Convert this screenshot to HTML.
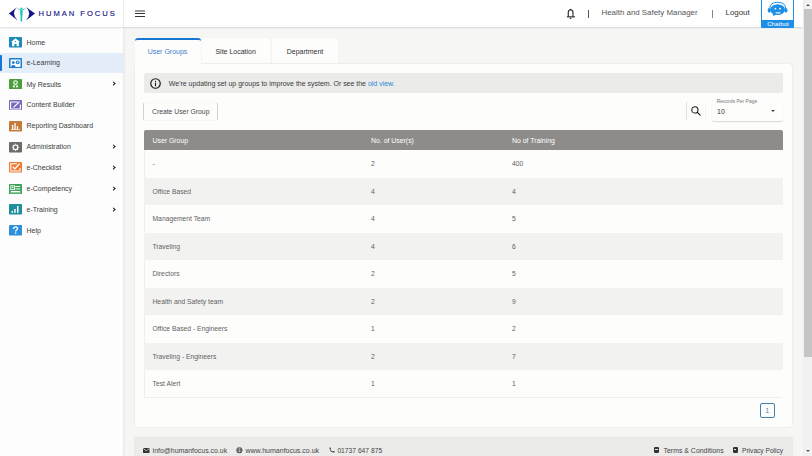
<!DOCTYPE html>
<html><head><meta charset="utf-8">
<style>
*{margin:0;padding:0;box-sizing:border-box}
html,body{width:812px;height:456px;overflow:hidden}
body{font-family:"Liberation Sans",sans-serif;background:#f6f6f5;position:relative;color:#333}
.abs{position:absolute}
.t{position:absolute;white-space:nowrap;line-height:10px;height:10px}
#header{left:0;top:0;width:803px;height:27px;background:#fff;box-shadow:0 1px 1.5px rgba(0,0,0,.13);z-index:5}
#sidebar{left:0;top:27px;width:124px;height:429px;background:#fdfdfd;border-right:1px solid #ebebeb;box-shadow:1px 0 2px rgba(0,0,0,.04)}
.ico{position:absolute;left:9px;width:13px;height:10.5px;border-radius:1px}
.st{position:absolute;left:26.5px;font-size:7px;color:#3c3c3c;line-height:10px;white-space:nowrap}
.chev{position:absolute;left:111.6px;width:2.9px;height:2.9px;border-right:1.1px solid #111;border-top:1.1px solid #111;transform:rotate(45deg);margin-top:-0.3px}
#scroll{left:803px;top:0;width:9px;height:456px;background:#f1f1f1}
#thumb{left:804px;top:9px;width:8px;height:348px;background:#c5c5c5}
.card{left:134.5px;top:63.5px;width:657.5px;height:363.5px;background:#fdfdfc;border-radius:3px;box-shadow:0 0 2.5px rgba(0,0,0,.1)}
.tab{position:absolute;top:38px;height:25px;background:#fdfdfc;border-radius:3px 3px 0 0;font-size:7px;text-align:center;line-height:25px;color:#333}
.row{position:absolute;left:144px;width:639px;height:27.5px}
.row.g{background:#f2f2f1}
.cell{position:absolute;font-size:6.75px;color:#626262;line-height:27.5px;white-space:nowrap}
</style></head><body>

<div id="header" class="abs">
  <!-- logo -->
  <svg class="abs" style="left:6px;top:3px" width="32" height="22" viewBox="0 0 32 22">
    <path d="M2.9 10.4 L12 3.4 Q8.2 6.5 8 10.4 Q8.2 14.3 11.6 17.4 Z" fill="#14178a"/>
    <path d="M29 10.4 L20 4.1 Q23 7 23.2 10.4 Q23 14.2 20 17.6 Z" fill="#14178a"/>
    <path d="M11.1 5.6 L14.4 7.6 L14.6 18.6 L16.2 18.6 L16.4 7.6 L19.8 5.6 L19.5 5.2 L16 6.6 L14.8 6.6 L11.4 5.2 Z" fill="#25c0c4"/>
    <circle cx="15.4" cy="5.6" r="1.1" fill="#25c0c4"/>
    <path d="M14.3 8 L16.5 8 L16.3 12 L14.5 12Z" fill="#25c0c4"/>
  </svg>
  <div class="t" style="left:38.6px;top:8.8px;font-size:7.6px;letter-spacing:1.97px;color:#14178a;-webkit-text-stroke:0.15px #14178a">HUMAN FOCUS</div>
  <div class="abs" style="left:123px;top:0;width:1px;height:27px;background:#ececec"></div>
  <!-- hamburger -->
  <div class="abs" style="left:135px;top:10.1px;width:10px;height:1.6px;background:#9c9c9c"></div>
  <div class="abs" style="left:135px;top:13px;width:10px;height:1.3px;background:#333"></div>
  <div class="abs" style="left:135px;top:16px;width:10px;height:1.3px;background:#333"></div>
  <!-- bell -->
  <svg class="abs" style="left:566px;top:8px" width="10" height="12" viewBox="0 0 10 12">
    <path d="M2.25 8.6 L2.25 4.2 Q2.25 1.9 4.6 1.7 Q6.95 1.9 6.95 4.2 L6.95 8.6" fill="none" stroke="#1a1a1a" stroke-width="1.05"/>
    <path d="M0.9 8.85 L8.9 8.85" stroke="#1a1a1a" stroke-width="1.1"/>
    <path d="M3.9 1.8 L4.6 0.6 L5.3 1.8Z" fill="#1a1a1a"/>
    <ellipse cx="4.6" cy="10.3" rx="0.9" ry="0.65" fill="#1a1a1a"/>
  </svg>
  <div class="abs" style="left:588px;top:10px;width:1px;height:7.7px;background:#555"></div>
  <div class="t" style="left:601.5px;top:8px;font-size:7.9px;color:#555">Health and Safety Manager</div>
  <div class="abs" style="left:712.2px;top:10px;width:1px;height:7.7px;background:#888"></div>
  <div class="t" style="left:725.5px;top:8px;font-size:7.9px;color:#333">Logout</div>
  <!-- chatbot -->
  <div class="abs" style="left:761px;top:0;width:33px;height:27.6px;border:1.1px solid #1e8fe6;border-top:none;background:#fff;border-radius:0 0 1.5px 1.5px"></div>
  <div class="abs" style="left:761px;top:19.8px;width:33px;height:7.8px;background:#1e8fe6;border-radius:0 0 1.5px 1.5px"></div>
  <div class="t" style="left:761.5px;top:19px;width:33px;text-align:center;font-size:6.2px;color:#fff">Chatbot</div>
  <svg class="abs" style="left:766px;top:1px" width="22" height="16" viewBox="0 0 22 16">
    <path d="M3.8 7.5 Q3.8 1.3 11.7 1.3 Q19.6 1.3 19.6 7.5" fill="none" stroke="#1e8fe6" stroke-width="1"/>
    <ellipse cx="11.6" cy="8.6" rx="7.3" ry="5.4" fill="#1e8fe6"/>
    <path d="M6.5 12 L7.4 15 L10.5 13.4Z" fill="#1e8fe6"/>
    <ellipse cx="3.3" cy="9.3" rx="1.6" ry="2.4" fill="#1e8fe6"/>
    <ellipse cx="19.9" cy="9.3" rx="1.6" ry="2.4" fill="#1e8fe6"/>
    <circle cx="9.4" cy="7.6" r="0.9" fill="#fff"/>
    <circle cx="14" cy="7.6" r="0.9" fill="#fff"/>
    <path d="M9.6 11.9 L14.6 11.9" stroke="#fff" stroke-width="1.1"/>
  </svg>
</div>

<div id="sidebar" class="abs">
</div>
<!-- sidebar items (absolute to body) -->
<div class="abs" style="left:0;top:53px;width:123px;height:20px;background:#e3eefa"></div>
<div class="abs" style="left:0;top:55px;width:2px;height:16px;background:#1976d2;border-radius:0 1px 1px 0"></div>

<svg class="abs" style="left:9px;top:37.1px" width="13" height="10.6" viewBox="0 0 13 10.6"><rect width="13" height="10.6" rx="0.8" fill="#1b8ab6"/><path d="M6.5 1.2 L11 5 L9.9 5 L9.9 9.2 L7.6 9.2 L7.6 7 L5.4 7 L5.4 9.2 L3.1 9.2 L3.1 5 L2 5 Z" fill="#fff"/><circle cx="6.5" cy="4.6" r="0.7" fill="#1b8ab6"/></svg>
<div class="st" style="top:37.9px">Home</div>
<svg class="abs" style="left:9px;top:57.8px" width="13" height="10.6" viewBox="0 0 13 10.6"><rect width="13" height="10.6" rx="0.8" fill="#1a7fd0"/><rect x="1.5" y="1.5" width="10" height="7.4" fill="#fff"/><circle cx="4.3" cy="4.6" r="1.45" fill="#1a7fd0"/><path d="M2.4 8.9 L2.4 7.6 Q4.3 6.2 6.2 7.6 L6.2 8.9Z" fill="#1a7fd0"/><circle cx="8.7" cy="4.3" r="1.9" fill="#1a7fd0"/><path d="M8.1 3.3 L9.8 4.3 L8.1 5.3Z" fill="#fff"/></svg>
<div class="st" style="top:58.1px">e-Learning</div>
<svg class="abs" style="left:9px;top:78.8px" width="13" height="10.6" viewBox="0 0 13 10.6"><rect width="13" height="10.6" rx="0.8" fill="#4a9f3c"/><circle cx="6.5" cy="3.6" r="1.8" fill="none" stroke="#fff" stroke-width="1.1"/><circle cx="4.9" cy="7.4" r="1.05" fill="#fff"/><circle cx="8.1" cy="7.4" r="1.05" fill="#fff"/></svg>
<div class="st" style="top:79.5px">My Results</div>
<div class="chev" style="top:82.5px"></div>
<svg class="abs" style="left:9px;top:99.6px" width="13" height="10.6" viewBox="0 0 13 10.6"><rect width="13" height="10.6" rx="0.8" fill="#7a66ba"/><path d="M1.6 2 L9 2 M1.6 1.5 L1.6 9 L11.4 9 L11.4 4.5" fill="none" stroke="#fff" stroke-width="1.1"/><path d="M4.5 7.4 L10.6 1.6" stroke="#fff" stroke-width="1.3"/></svg>
<div class="st" style="top:100.2px">Content Builder</div>
<svg class="abs" style="left:9px;top:121px" width="13" height="10.6" viewBox="0 0 13 10.6"><rect width="13" height="10.6" rx="0.8" fill="#c57b3b"/><rect x="3" y="4" width="1.3" height="4.6" fill="#fff"/><rect x="5.4" y="2" width="1.3" height="6.6" fill="#fff"/><rect x="7.8" y="5.2" width="1.3" height="3.4" fill="#fff"/><rect x="2" y="8.2" width="9" height="0.7" fill="#fff"/></svg>
<div class="st" style="top:120.5px">Reporting Dashboard</div>
<svg class="abs" style="left:9px;top:142px" width="13" height="10.6" viewBox="0 0 13 10.6"><rect width="13" height="10.6" rx="0.8" fill="#6c6c6c"/><circle cx="6.5" cy="5.3" r="2.3" fill="none" stroke="#fff" stroke-width="1.2"/><path d="M6.5 1.8 L6.5 2.6 M6.5 8 L6.5 8.8 M3 5.3 L3.8 5.3 M9.2 5.3 L10 5.3 M4 2.8 L4.6 3.4 M8.4 7.2 L9 7.8 M9 2.8 L8.4 3.4 M4.6 7.2 L4 7.8" stroke="#fff" stroke-width="1.1"/></svg>
<div class="st" style="top:141.5px">Administration</div>
<div class="chev" style="top:145px"></div>
<svg class="abs" style="left:9px;top:162.3px" width="13" height="10.6" viewBox="0 0 13 10.6"><rect width="13" height="10.6" rx="0.8" fill="#ef7b30"/><path d="M8 1.8 L1.8 1.8 L1.8 9 L11 9 L11 6" fill="none" stroke="#fff" stroke-width="1.1"/><path d="M3.8 4.8 L5.8 7 L10.6 1.6" fill="none" stroke="#fff" stroke-width="1.3"/></svg>
<div class="st" style="top:162.9px">e-Checklist</div>
<div class="chev" style="top:166px"></div>
<svg class="abs" style="left:9px;top:183.8px" width="13" height="10.6" viewBox="0 0 13 10.6"><rect width="13" height="10.6" rx="0.8" fill="#3ca255"/><rect x="1.8" y="1.8" width="3.6" height="3.9" fill="none" stroke="#fff" stroke-width="0.9"/><circle cx="3.6" cy="3.5" r="0.7" fill="#fff"/><rect x="6.3" y="2" width="4.9" height="1" fill="#fff"/><rect x="6.3" y="4.4" width="4.9" height="1" fill="#fff"/><rect x="1.8" y="7" width="9.4" height="1" fill="#fff"/><rect x="1.3" y="8.6" width="10.4" height="0.6" fill="#fff"/></svg>
<div class="st" style="top:184.3px">e-Competency</div>
<div class="chev" style="top:187px"></div>
<svg class="abs" style="left:9px;top:204.2px" width="13" height="10.6" viewBox="0 0 13 10.6"><rect width="13" height="10.6" rx="0.8" fill="#1f8f9d"/><rect x="2.5" y="7" width="1.5" height="1.8" fill="#fff"/><rect x="5.2" y="5" width="1.5" height="3.8" fill="#fff"/><rect x="8" y="2" width="1.5" height="6.8" fill="#fff"/></svg>
<div class="st" style="top:205.0px">e-Training</div>
<div class="chev" style="top:208px"></div>
<svg class="abs" style="left:9px;top:225.2px" width="13" height="10.6" viewBox="0 0 13 10.6"><rect width="13" height="10.6" rx="0.8" fill="#2e8fda"/><path d="M4.6 3.9 Q4.6 1.8 6.5 1.8 Q8.5 1.8 8.5 3.6 Q8.5 4.7 7.3 5.3 Q6.6 5.7 6.6 6.6" fill="none" stroke="#fff" stroke-width="1.3"/><rect x="5.9" y="7.4" width="1.4" height="1.4" fill="#fff"/></svg>
<div class="st" style="top:225.7px">Help</div>

<!-- tabs -->
<div class="tab" style="left:201.7px;width:68px;top:38.3px;height:24.4px;line-height:27.8px">Site Location</div>
<div class="tab" style="left:272px;width:66px;top:38.3px;height:24.4px;line-height:27.8px">Department</div>

<div class="abs card"></div>
<div class="tab" style="left:134.5px;width:66px;color:#3d7fd0;border-top:2.2px solid #1976d2;height:27px;line-height:24.5px">User Groups</div>

<!-- banner -->
<div class="abs" style="left:143.5px;top:73px;width:639.5px;height:20px;background:#ebebea;border-radius:2px"></div>
<svg class="abs" style="left:149.5px;top:77.5px" width="11" height="11" viewBox="0 0 11 11">
  <circle cx="5.5" cy="5.5" r="4.75" fill="none" stroke="#1a1a1a" stroke-width="1.2"/>
  <rect x="4.95" y="4.6" width="1.1" height="3.6" fill="#1a1a1a"/>
  <rect x="4.95" y="2.8" width="1.1" height="1.1" fill="#1a1a1a"/>
</svg>
<div class="t" style="left:168.8px;top:78.5px;font-size:6.98px;color:#3a3a3a">We're updating set up groups to improve the system. Or see the <span style="color:#2a8ad4">old view.</span></div>

<!-- create button -->
<div class="abs" style="left:143.2px;top:102px;width:75.3px;height:18.6px;border:1px solid #d2d2d2;border-top-color:#f8f8f8;border-bottom-color:#f6f6f6;border-radius:2.5px;background:#fdfdfc"></div>
<div class="t" style="left:152px;top:106.5px;font-size:6.8px;color:#4a4a4a">Create User Group</div>

<!-- search -->
<div class="abs" style="left:686.3px;top:102.3px;width:1px;height:18px;background:#e2e2e2"></div>
<div class="abs" style="left:705.3px;top:102.3px;width:1px;height:18px;background:#f3f3f3"></div>
<svg class="abs" style="left:690px;top:105px" width="12" height="12" viewBox="0 0 12 12">
  <circle cx="4.9" cy="4.9" r="3.1" fill="none" stroke="#1a1a1a" stroke-width="1.05"/>
  <path d="M7.1 7.1 L10.5 10.4" stroke="#1a1a1a" stroke-width="1.2"/>
</svg>
<!-- select -->
<div class="abs" style="left:712px;top:101px;width:71px;height:19.5px;background:#fdfdfc;box-shadow:0 1px 1px rgba(0,0,0,.15);border-radius:2px"></div>
<div class="t" style="left:716.8px;top:97px;font-size:4.95px;color:#777">Records Per Page</div>
<div class="t" style="left:717px;top:106.5px;font-size:7px;color:#333">10</div>
<div class="abs" style="left:770.5px;top:110px;width:0;height:0;border-left:2.5px solid transparent;border-right:2.5px solid transparent;border-top:2.5px solid #444"></div>

<!-- table -->
<div class="abs" style="left:143.5px;top:130px;width:639.5px;height:267.5px;border:1px solid #eee;border-right-color:transparent;border-top:none;border-radius:2px"></div>
<div class="abs" style="left:144px;top:130.3px;width:639px;height:19.7px;background:#8d8c89;border-radius:2px 2px 0 0"></div>
<div class="t" style="left:152.5px;top:135.8px;font-size:6.9px;color:#fff">User Group</div>
<div class="t" style="left:371px;top:135.8px;font-size:6.9px;color:#fff">No. of User(s)</div>
<div class="t" style="left:512px;top:135.8px;font-size:6.9px;color:#fff">No of Training</div>

<div class="row" style="top:150px"><div class="cell" style="left:8.5px">-</div><div class="cell" style="left:227px">2</div><div class="cell" style="left:368px">400</div></div>
<div class="row g" style="top:177.5px"><div class="cell" style="left:8.5px">Office Based</div><div class="cell" style="left:227px">4</div><div class="cell" style="left:368px">4</div></div>
<div class="row" style="top:205px"><div class="cell" style="left:8.5px">Management Team</div><div class="cell" style="left:227px">4</div><div class="cell" style="left:368px">5</div></div>
<div class="row g" style="top:232.5px"><div class="cell" style="left:8.5px">Traveling</div><div class="cell" style="left:227px">4</div><div class="cell" style="left:368px">6</div></div>
<div class="row" style="top:260px"><div class="cell" style="left:8.5px">Directors</div><div class="cell" style="left:227px">2</div><div class="cell" style="left:368px">5</div></div>
<div class="row g" style="top:287.5px"><div class="cell" style="left:8.5px">Health and Safety team</div><div class="cell" style="left:227px">2</div><div class="cell" style="left:368px">9</div></div>
<div class="row" style="top:315px"><div class="cell" style="left:8.5px">Office Based - Engineers</div><div class="cell" style="left:227px">1</div><div class="cell" style="left:368px">2</div></div>
<div class="row g" style="top:342.5px"><div class="cell" style="left:8.5px">Traveling - Engineers</div><div class="cell" style="left:227px">2</div><div class="cell" style="left:368px">7</div></div>
<div class="row" style="top:370px"><div class="cell" style="left:8.5px">Test Alert</div><div class="cell" style="left:227px">1</div><div class="cell" style="left:368px">1</div></div>

<!-- pagination -->
<div class="abs" style="left:760px;top:403.3px;width:14.5px;height:14.5px;border:1px solid #3d82b0;border-radius:2px"></div>
<div class="t" style="left:760px;top:405.5px;width:14.5px;text-align:center;font-size:6.5px;color:#3d82b0">1</div>

<!-- footer -->
<div class="abs" style="left:134px;top:436.5px;width:658.5px;height:20px;background:#ebebea;border-radius:2px 2px 0 0;box-shadow:0 0 1.5px rgba(0,0,0,.08)"></div>
<svg class="abs" style="left:143px;top:447.5px" width="7" height="5.5" viewBox="0 0 7 5.5"><rect x="0" y="0" width="6.5" height="5" rx="0.5" fill="#333"/><path d="M0.3 0.5 L3.25 2.8 L6.2 0.5" fill="none" stroke="#ebebea" stroke-width="0.7"/></svg>
<div class="t" style="left:152.6px;top:446px;font-size:6.94px;color:#444">info@humanfocus.co.uk</div>
<svg class="abs" style="left:236px;top:447px" width="7" height="7" viewBox="0 0 7 7"><circle cx="3.4" cy="3.2" r="3" fill="#333"/><path d="M0.6 3.2 L6.2 3.2 M3.4 0.3 L3.4 6.1 M1.2 1.6 Q3.4 2.4 5.6 1.6 M1.2 4.8 Q3.4 4 5.6 4.8" stroke="#ebebea" stroke-width="0.5" fill="none"/></svg>
<div class="t" style="left:245.5px;top:446px;font-size:7px;color:#444">www.humanfocus.co.uk</div>
<svg class="abs" style="left:328.5px;top:447px" width="6" height="6" viewBox="0 0 6 6"><path d="M0.6 1 Q0.6 0.2 1.4 0.2 L2 1.8 L1.4 2.4 Q2.2 3.8 3.6 4.6 L4.2 4 L5.8 4.6 Q5.8 5.6 5 5.6 Q0.6 5.2 0.6 1Z" fill="#333"/></svg>
<div class="t" style="left:337.4px;top:446px;font-size:6.71px;color:#444">01737 647 875</div>
<div class="abs" style="left:654px;top:447.2px;width:5px;height:5.9px;background:#333;border-radius:1.2px"></div>
<div class="abs" style="left:655.2px;top:448.6px;width:2.6px;height:0.6px;background:#ebebea"></div>
<div class="t" style="left:663.5px;top:446px;font-size:6.95px;color:#444">Terms &amp; Conditions</div>
<div class="abs" style="left:733px;top:447.2px;width:4.6px;height:5.9px;background:#333;border-radius:1.2px"></div>
<div class="abs" style="left:734.1px;top:448.6px;width:2.4px;height:0.6px;background:#ebebea"></div>
<div class="t" style="left:742px;top:446px;font-size:6.62px;color:#444">Privacy Policy</div>

<!-- scrollbar -->
<div id="scroll" class="abs"></div>
<div id="thumb" class="abs"></div>
<div class="abs" style="left:805.5px;top:3.5px;width:0;height:0;border-left:2.5px solid transparent;border-right:2.5px solid transparent;border-bottom:2.5px solid #555"></div>
<div class="abs" style="left:805.5px;top:450px;width:0;height:0;border-left:2.5px solid transparent;border-right:2.5px solid transparent;border-top:2.5px solid #555"></div>
</body></html>
